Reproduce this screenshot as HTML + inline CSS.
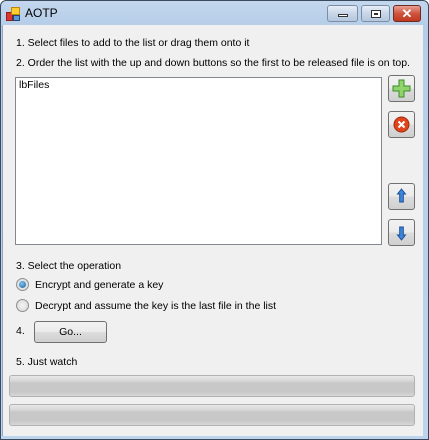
<!DOCTYPE html>
<html><head><style>
*{margin:0;padding:0;box-sizing:border-box}
body{width:429px;height:440px;overflow:hidden;background:#fff;font-family:"Liberation Sans",sans-serif;font-size:10.5px;color:#000;position:relative}
.frame{position:absolute;left:0;top:0;width:429px;height:440px;border:1px solid #3a4a5c;border-radius:6px 6px 0 0;background:linear-gradient(#c3d7ee,#b5cde8 25px,#bcd4ec);}
.client{position:absolute;left:2px;top:25px;width:421px;height:411px;background:#f0f0f0;border-left:1px solid #8aa6c8;}
.t{position:absolute;white-space:nowrap}
.tb{position:absolute;top:5px;height:17px;border:1px solid #7d8ea4;border-radius:3px;background:linear-gradient(#e6eef8,#c8d6e8 50%,#b5c7de)}
.btn{position:absolute;border:1px solid #707070;border-radius:3px;background:linear-gradient(#f2f2f2,#ebebeb 50%,#dddddd 50%,#cfcfcf)}
.pb{position:absolute;left:9px;width:406px;height:22px;border:1px solid #b2b2b2;border-radius:3px;background:linear-gradient(#e8e8e8,#d6d6d6 25%,#c8c8c8 35%,#c8c8c8 80%,#d8d8d8)}
.radio{position:absolute;width:13px;height:13px;border-radius:50%;border:1px solid #8e8f8f;background:radial-gradient(#f4f4f4,#d4d4d4)}
</style></head><body>
<div class="frame"></div>
<svg style="position:absolute;left:6px;top:6px" width="16" height="16"><rect x="0.5" y="6.5" width="6" height="8" fill="#d33" stroke="#822"/><rect x="5.5" y="1.5" width="8" height="7" fill="#fc3" stroke="#b80"/><rect x="7.5" y="9.5" width="6" height="5" fill="#59d" stroke="#247"/></svg>
<div class="t" style="left:25px;top:6px;font-size:12px">AOTP</div>
<div class="tb" style="left:327px;width:31px"><div style="position:absolute;left:10px;top:8px;width:10px;height:3px;border:1px solid #333;background:#fff"></div></div>
<div class="tb" style="left:361px;width:29px"><div style="position:absolute;left:9px;top:4px;width:10px;height:8px;border:1px solid #333;background:#fff"><div style="margin:2px;height:2px;border:1px solid #333"></div></div></div>
<div class="tb" style="left:393px;width:28px;border-color:#6d2b21;background:linear-gradient(#e8a093,#d0533e 50%,#c0381f)"><div style="position:absolute;left:0;right:0;top:0;text-align:center;color:#fff;font-weight:bold;font-size:13px;line-height:15px">✕</div></div>
<div class="client">
<div class="t" style="left:13px;top:12px">1. Select files to add to the list or drag them onto it</div>
<div class="t" style="left:13px;top:32px">2. Order the list with the up and down buttons so the first to be released file is on top.</div>
<div style="position:absolute;left:12px;top:52px;width:367px;height:168px;background:#fff;border:1px solid #828790"></div>
<div class="t" style="left:16px;top:54px">lbFiles</div>
<div class="btn" style="left:385px;top:50px;width:27px;height:27px"><svg width="25" height="25"><path d="M10 4h5v6h6v5h-6v6h-5v-6h-6v-5h6z" fill="#8fd46a" stroke="#3d8a2c"/></svg></div>
<div class="btn" style="left:385px;top:86px;width:27px;height:27px"><svg width="25" height="25"><circle cx="12.5" cy="12.5" r="7.5" fill="#e0441c" stroke="#a02a10"/><path d="M9.5 9.5l6 6M15.5 9.5l-6 6" stroke="#fff" stroke-width="2"/></svg></div>
<div class="btn" style="left:385px;top:158px;width:27px;height:27px"><svg width="25" height="25"><path d="M12.5 5l4 5h-2.2v8h-3.6v-8h-2.2z" fill="#3d86db" stroke="#1b4f99"/></svg></div>
<div class="btn" style="left:385px;top:194px;width:27px;height:27px"><svg width="25" height="25"><path d="M12.5 20l4-5h-2.2v-8h-3.6v8h-2.2z" fill="#3d86db" stroke="#1b4f99"/></svg></div>
<div class="t" style="left:13px;top:235px">3. Select the operation</div>
<div class="radio" style="left:13px;top:253px"><div style="margin:2px;width:7px;height:7px;border-radius:50%;background:radial-gradient(circle at 40% 35%,#7cc6f2,#1a5f9a)"></div></div>
<div class="t" style="left:32px;top:254px">Encrypt and generate a key</div>
<div class="radio" style="left:13px;top:274px"></div>
<div class="t" style="left:32px;top:275px">Decrypt and assume the key is the last file in the list</div>
<div class="t" style="left:13px;top:300px">4.</div>
<div class="btn" style="left:31px;top:296px;width:73px;height:22px;text-align:center;line-height:20px">Go...</div>
<div class="t" style="left:13px;top:331px">5. Just watch</div>
</div>
<div class="pb" style="top:375px"></div>
<div class="pb" style="top:404px"></div>
</body></html>
